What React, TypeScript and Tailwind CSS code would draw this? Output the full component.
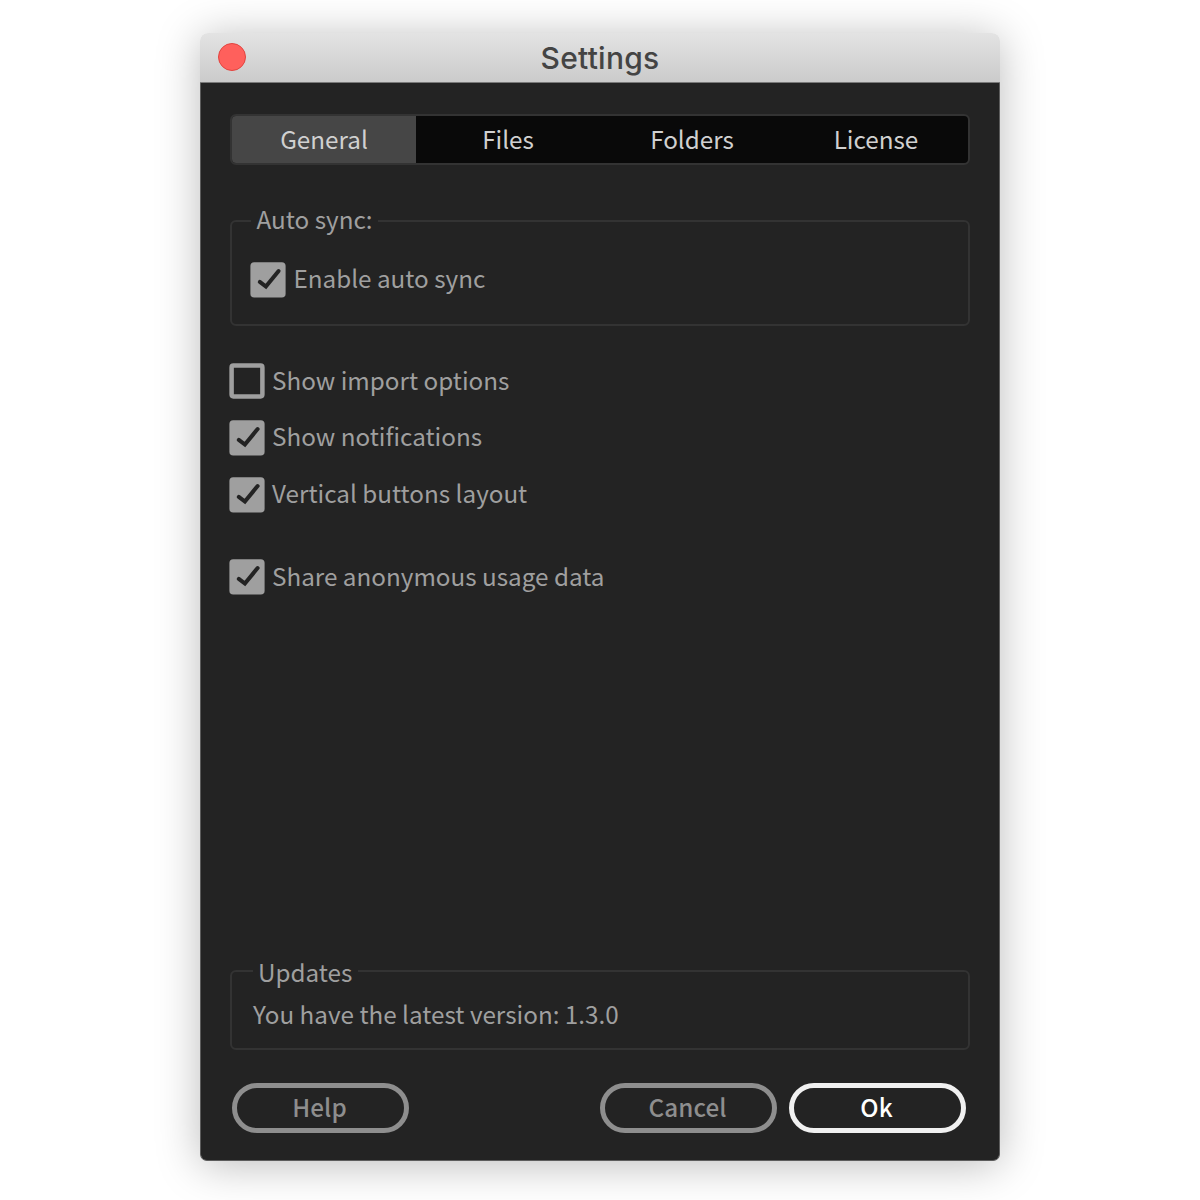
import React from "react";

function CheckBox({ checked }: { checked: boolean }) {
  return (
    <svg width="36" height="36" viewBox="0 0 36 36" className="block shrink-0" fill="none">
      {checked ? (
        <>
          <rect x="0.4" y="0.2" width="35.2" height="35.4" rx="3.8" fill="#9f9f9f" />
          <path d="M9.8 19.9 L15.9 24.6 L28.6 9" stroke="#232323" strokeWidth="4" strokeLinecap="round" />
        </>
      ) : (
        <rect x="2.6" y="2.6" width="30.8" height="30.8" rx="1.8" stroke="#9f9f9f" strokeWidth="4.5" />
      )}
    </svg>
  );
}

function Option({ label, checked, className = "", labelClass = "-mt-[5px]" }: { label: string; checked: boolean; className?: string; labelClass?: string }) {
  return (
    <div role="checkbox" aria-checked={checked} className={`flex h-9 items-center gap-[7px] ${className}`}>
      <CheckBox checked={checked} />
      <span className={`leading-9 whitespace-nowrap ${labelClass}`}>{label}</span>
    </div>
  );
}

function Group({ title, legendClass, className, children }: { title: string; legendClass: string; className: string; children: React.ReactNode }) {
  return (
    <section className={`relative rounded-md border-2 border-[#333333] ${className}`}>
      <h2 className={`absolute bg-[#232323] leading-8 whitespace-nowrap ${legendClass}`}>{title}</h2>
      {children}
    </section>
  );
}

function PillButton({ label, primary = false, className = "" }: { label: string; primary?: boolean; className?: string }) {
  return (
    <button
      className={`flex h-[50px] w-[177px] items-center justify-center rounded-full border-5 pr-[2px] pb-[2px] font-medium tracking-[0.1px] leading-8 ${
        primary ? "border-[#f0f0f0] text-white" : "border-[#8e8e8e] text-[#8e8e8e]"
      } ${className}`}
    >
      {label}
    </button>
  );
}

const tabs = ["General", "Files", "Folders", "License"];

export default function App() {
  return (
    <div className="flex h-[1200px] w-[1200px] items-start justify-center overflow-hidden bg-white pt-[33px]">
      <main className="flex h-[1128px] w-[800px] flex-col rounded-t-[8px] rounded-b-[7px] font-['Noto_Sans_CJK_SC',sans-serif] text-[24.25px] text-[#9f9f9f] shadow-[0_4px_44px_rgba(0,0,0,0.27)]">
        <header className="flex h-[50px] shrink-0 items-center rounded-t-[8px] border-b border-[#7a7a7a] bg-linear-to-b from-[#e3e3e3] to-[#cbcbcb] px-[18px] pb-[2px]">
          <span className="size-7 rounded-full border border-[#e2443f] bg-[#ff605c]" />
          <h1 className="flex-1 pt-[2px] pr-7 text-center font-[Inter,sans-serif] text-[30px] font-[450] leading-9 tracking-[0.25px] text-[#444444]">Settings</h1>
        </header>
        <div className="flex flex-1 flex-col rounded-b-[7px] border-x border-b border-[#5c5c5c] bg-[#232323] px-[29px]">
          <nav className="mt-[31px] flex h-[51px] overflow-hidden rounded-md border-2 border-[#333333] bg-[#090909] text-[#d0d0d0]">
            {tabs.map((tab) => (
              <button
                key={tab}
                className={`flex flex-1 items-center justify-center pb-[2px] leading-8 ${tab === "General" ? "bg-[#464646]" : ""}`}
              >
                {tab}
              </button>
            ))}
          </nav>
          <Group title="Auto sync:" legendClass="left-[19px] -top-[19px] pr-[5.5px] pl-[5.5px]" className="mt-[55px] h-[106px]">
            <Option label="Enable auto sync" checked className="mt-10 ml-[18px]" labelClass="-mt-[5px] pl-[0.5px]" />
          </Group>
          <div className="-ml-px flex flex-col">
            <Option label="Show import options" checked={false} className="mt-[37px]" labelClass="-mt-[3px]" />
            <Option label="Show notifications" checked className="mt-[21px]" />
            <Option label="Vertical buttons layout" checked className="mt-[21px]" />
            <Option label="Share anonymous usage data" checked className="mt-[46px]" labelClass="-mt-[3px]" />
          </div>
          <Group title="Updates" legendClass="left-[21px] -top-[16px] pr-1.5 pl-[5px]" className="mt-auto h-[80px]">
            <p className="mt-[26px] ml-[21px] leading-8">You have the latest version: 1.3.0</p>
          </Group>
          <footer className="mt-[33px] mb-[27px] flex gap-3 pr-1 pl-0.5">
            <PillButton label="Help" className="mr-auto" />
            <PillButton label="Cancel" />
            <PillButton label="Ok" primary />
          </footer>
        </div>
      </main>
    </div>
  );
}
